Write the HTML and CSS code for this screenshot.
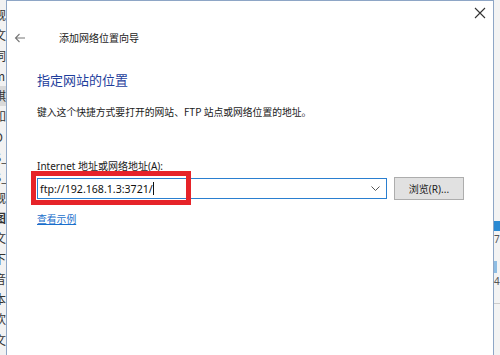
FILE: index.html
```html
<!DOCTYPE html>
<html lang="zh-CN">
<head>
    <meta charset="UTF-8">
    <title>添加网络位置向导</title>
    <link rel="stylesheet" href="styles.css">
</head>
<body>
    <div class="screen">
        <div class="side-left">
            <span>觋</span><span>文</span><span>词</span><span>m</span>
            <span class="hl">棋</span><span>如</span><span>O</span><span>S_</span>
            <span>S_</span><span>觋</span><span class="bold">图</span><span>文</span>
            <span>下</span><span>音</span><span>本</span><span>欢</span><span>文</span>
        </div>

        <div class="dialog">
            <div class="titlebar">
                <svg class="close" width="12" height="12" viewBox="0 0 12 12">
                    <path d="M1 1 L11 11 M11 1 L1 11" stroke="#333" stroke-width="1.1" fill="none"/>
                </svg>
            </div>
            <div class="header">
                <svg class="back" width="12" height="10" viewBox="0 0 12 10">
                    <path d="M11 5 H1.5 M5.5 1 L1.5 5 L5.5 9" stroke="#777" stroke-width="1.1" fill="none"/>
                </svg>
                <span class="title">添加网络位置向导</span>
            </div>

            <div class="content">
                <h1 class="heading">指定网站的位置</h1>
                <p class="desc">键入这个快捷方式要打开的网站、FTP 站点或网络位置的地址。</p>

                <label class="field-label">Internet 地址或网络地址(A):</label>
                <div class="field-row">
                    <div class="combo">
                        <span class="combo-text">ftp://192.168.1.3:3721/<span class="caret"></span></span>
                        <svg class="chevron" width="9" height="5" viewBox="0 0 9 5">
                            <path d="M0.5 0.5 L4.5 4.5 L8.5 0.5" stroke="#555" stroke-width="1" fill="none"/>
                        </svg>
                        <div class="mark"></div>
                    </div>
                    <button class="browse">浏览(R)...</button>
                </div>

                <a class="example" href="#">查看示例</a>
            </div>
        </div>

        <div class="side-right">
            <div class="bar-blue"></div>
            <span class="num">7</span>
            <div class="bar-light"></div>
            <span class="num">4</span>
            <div class="rule"></div>
        </div>
    </div>
</body>
</html>
```

FILE: styles.css
```css
html, body {
    margin: 0;
    padding: 0;
    background: #fff;
}
body {
    font-family: "Noto Sans", "Noto Sans CJK SC", sans-serif;
    color: #1a1a1a;
}
.screen {
    display: flex;
    width: 500px;
    height: 355px;
    overflow: hidden;
}

/* background windows peeking out on both sides */
.side-left {
    width: 6px;
    flex: none;
    overflow: hidden;
    background: #f2f2f2;
    display: flex;
    flex-direction: column;
    padding-top: 5px;
    font-family: "Noto Sans CJK SC", sans-serif;
    font-size: 12px;
    line-height: 20.3px;
    color: #333;
}
.side-left span {
    margin-left: -6px;
    white-space: nowrap;
}
.side-left .hl {
    background: #d9d9d9;
}
.side-left .bold {
    font-weight: bold;
}
.side-right {
    width: 6px;
    flex: none;
    background: #f3f3f3;
    display: flex;
    flex-direction: column;
    padding-top: 221px;
    font-size: 10px;
    color: #555;
}
.bar-blue {
    height: 10px;
    background: #2b8ad3;
}
.bar-light {
    height: 12px;
    margin-top: 14px;
    width: 3px;
    background: #8fbde3;
}
.num {
    line-height: 16px;
}
.rule {
    margin-top: 14px;
    height: 1px;
    background: #ccc;
}

/* wizard window */
.dialog {
    flex: 1;
    border: 1px solid #8ea6c6;
    border-bottom: none;
    background: #fff;
    display: flex;
    flex-direction: column;
}
.titlebar {
    height: 24px;
    display: flex;
    justify-content: flex-end;
    align-items: center;
    padding-right: 7px;
}
.header {
    display: flex;
    align-items: center;
    height: 25px;
    padding-left: 7px;
}
.back {
    margin-right: 33px;
}
.title {
    font-family: "Noto Sans CJK SC", sans-serif;
    font-size: 10px;
}
.content {
    padding-left: 30px;
    padding-right: 29px;
    display: flex;
    flex-direction: column;
    align-items: flex-start;
}
.heading {
    margin: 21px 0 0;
    font-family: "Noto Sans CJK SC", sans-serif;
    font-weight: normal;
    font-size: 13px;
    line-height: 18px;
    color: #1f3e9c;
}
.desc {
    margin: 16px 0 0;
    font-family: "Noto Sans CJK SC", sans-serif;
    font-size: 9.8px;
    line-height: 14px;
}
.field-label {
    margin-top: 40px;
    font-size: 10px;
    line-height: 14px;
}
.field-row {
    display: flex;
    align-items: center;
    gap: 7px;
    margin-top: 4px;
    width: 100%;
}
.combo {
    position: relative;
    flex: 1;
    height: 19px;
    border: 1px solid #2a7fd0;
    display: flex;
    align-items: center;
    padding: 0 6px 0 2px;
}
.combo-text {
    flex: 1;
    font-size: 10.6px;
    color: #111;
    display: flex;
    align-items: center;
}
.caret {
    display: inline-block;
    width: 1px;
    height: 13px;
    background: #111;
}
.chevron {
    flex: none;
}
/* red annotation box drawn over the field */
.mark {
    position: absolute;
    left: -7px;
    top: -8px;
    width: 150px;
    height: 24px;
    border: 5px solid #e62329;
}
.browse {
    width: 70px;
    height: 23px;
    flex: none;
    background: #e1e1e1;
    border: 1px solid #adadad;
    font-family: "Noto Sans", "Noto Sans CJK SC", sans-serif;
    font-size: 10px;
    color: #222;
    padding: 0;
}
.example {
    margin-top: 12px;
    font-family: "Noto Sans CJK SC", sans-serif;
    font-size: 9.8px;
    color: #1a6fcc;
}
```
